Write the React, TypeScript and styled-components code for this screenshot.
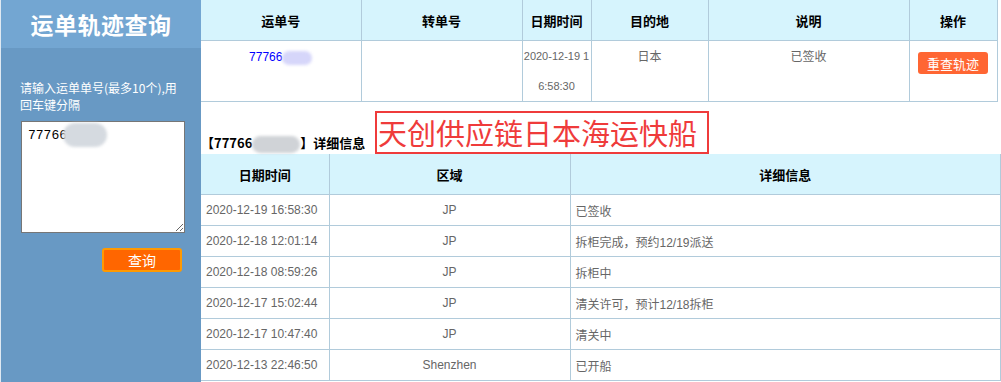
import React from "react";
import styled, { createGlobalStyle } from "styled-components";

const GlobalStyle = createGlobalStyle`
  html, body {
    margin: 0;
    padding: 0;
    background: #fff;
    font-family: "Liberation Sans", "Noto Sans CJK SC", sans-serif;
    font-size: 12px;
    color: #666;
  }
`

const Page = styled.div`
  display: flex;
  width: 1001px;
  height: 382px;
  overflow: hidden;
`

const Sidebar = styled.div`
  width: 200px;
  flex: none;
  background: #6899c4;
  border-left: 1px solid #dfe9f2;
  display: flex;
  flex-direction: column;
  .head{
    height: 48px;
    background: #73a6d2;
    color: #fff;
    font-family: "Noto Sans CJK SC", sans-serif;
    font-size: 23px;
    font-weight: bold;
    display: flex;
    align-items: center;
    justify-content: center;
    letter-spacing: 0.5px;
  }
  .tip{
    margin: 31px 14px 0 19px;
    color: #fff;
    font-family: "Noto Sans CJK SC", sans-serif;
    font-size: 12px;
    line-height: 17px;
  }
`

const InputBox = styled.div`
  position: relative;
  margin: 8px 0 0 20px;
  width: 164px;
  height: 112px;
  textarea{
    box-sizing: border-box;
    width: 164px;
    height: 112px;
    border: 1px solid #767676;
    padding: 6px 6px;
    font-family: "Liberation Mono", monospace;
    font-size: 13px;
    color: #000;
    resize: both;
    outline: none;
  }
`

const Blob = styled.span<{ $w: number, $h: number, $c: string }>`
  display: inline-block;
  width: ${p => p.$w}px;
  height: ${p => p.$h}px;
  background: ${p => p.$c};
  border-radius: ${p => p.$h / 2}px;
  filter: blur(1.5px);
  vertical-align: middle;
`

const MaskBlob = styled(Blob)`
  position: absolute;
  left: 42px;
  top: 2px;
`

const SearchButton = styled.button`
  align-self: flex-end;
  margin: 15px 19px 0 0;
  width: 80px;
  height: 24px;
  background: #ff6600;
  border: 2px solid #ff9900;
  border-radius: 3px;
  color: #fff;
  font-family: "Noto Sans CJK SC", sans-serif;
  font-size: 14px;
  padding: 0;
`

const Main = styled.div`
  flex: 1;
  display: flex;
  flex-direction: column;
`

const Table = styled.table<{ $width: number }>`
  width: ${p => p.$width}px;
  border-collapse: collapse;
  table-layout: fixed;
  th{
    background: #d6f4fd;
    color: #000;
    font-family: "Noto Sans CJK SC", sans-serif;
    font-size: 13px;
    font-weight: bold;
    border: 1px solid #b1cbdb;
    border-top: none;
    height: 40px;
    padding: 0;
  }
  td{
    border: 1px solid #b1cbdb;
    padding: 0;
  }
  tr > *:first-child{
    border-left: none;
  }
`

const TopCell = styled.td`
  text-align: center;
  vertical-align: top;
  line-height: 30px;
  height: 60px;
  word-break: break-all;
  font-family: "Noto Sans CJK SC", "Liberation Sans", sans-serif;
  a{
    color: #0000ff;
    text-decoration: none;
    font-family: "Liberation Sans", sans-serif;
  }
`

const DateCell = styled(TopCell)`
  font-family: "Liberation Sans", sans-serif;
  font-size: 11px;
`

const RetryButton = styled.button`
  margin-top: 11px;
  width: 70px;
  height: 22px;
  background: #ff6633;
  border: none;
  border-radius: 3px;
  color: #fff;
  font-family: "Noto Sans CJK SC", sans-serif;
  font-size: 13px;
  padding: 0;
  vertical-align: top;
`

const TitleBar = styled.div`
  position: relative;
  height: 52px;
  display: flex;
  align-items: flex-end;
  .title{
    color: #000;
    font-family: "Noto Sans CJK SC", sans-serif;
    font-weight: bold;
    font-size: 13px;
    line-height: 20px;
    margin-bottom: 1px;
  }
  .brand{
    position: absolute;
    left: 174px;
    top: 9px;
    box-sizing: border-box;
    width: 334px;
    height: 43px;
    border: 2px solid #ef3b3b;
    color: #ef3b3b;
    font-family: "Noto Sans CJK SC", sans-serif;
    font-size: 29px;
    line-height: 38px;
    padding-left: 1px;
    background: #fff;
    white-space: nowrap;
    overflow: hidden;
  }
`

const DetailCell = styled.td<{ $align: string }>`
  height: 30px;
  text-align: ${p => p.$align};
  padding-left: ${p => p.$align === 'left' ? '5px' : '0'} !important;
  font-family: "Liberation Sans", "Noto Sans CJK SC", sans-serif;
  font-size: 12px;
  color: #666;
`

const tracks = [
  {time: '2020-12-19 16:58:30', area: 'JP', info: '已签收'},
  {time: '2020-12-18 12:01:14', area: 'JP', info: '拆柜完成，预约12/19派送'},
  {time: '2020-12-18 08:59:26', area: 'JP', info: '拆柜中'},
  {time: '2020-12-17 15:02:44', area: 'JP', info: '清关许可，预计12/18拆柜'},
  {time: '2020-12-17 10:47:40', area: 'JP', info: '清关中'},
  {time: '2020-12-13 22:46:50', area: 'Shenzhen', info: '已开船'}
]

function App() {
  return (
    <>
      <GlobalStyle/>
      <Page>
        <Sidebar>
          <div className="head">运单轨迹查询</div>
          <div className="tip">请输入运单单号(最多10个),用回车键分隔</div>
          <InputBox>
            <textarea defaultValue="77766"/>
            <MaskBlob $w={44} $h={24} $c="#d5dae0"/>
          </InputBox>
          <SearchButton>查询</SearchButton>
        </Sidebar>
        <Main>
          <Table $width={796}>
            <colgroup>
              <col style={{width: 160}}/>
              <col style={{width: 161}}/>
              <col style={{width: 69}}/>
              <col style={{width: 117}}/>
              <col style={{width: 201}}/>
              <col style={{width: 88}}/>
            </colgroup>
            <thead>
              <tr>
                <th>运单号</th>
                <th>转单号</th>
                <th>日期时间</th>
                <th>目的地</th>
                <th>说明</th>
                <th>操作</th>
              </tr>
            </thead>
            <tbody>
              <tr>
                <TopCell><a href="#">77766<Blob $w={30} $h={14} $c="#d6d6fa"/></a></TopCell>
                <TopCell/>
                <DateCell>2020-12-19 16:58:30</DateCell>
                <TopCell>日本</TopCell>
                <TopCell>已签收</TopCell>
                <TopCell><RetryButton>重查轨迹</RetryButton></TopCell>
              </tr>
            </tbody>
          </Table>
          <TitleBar>
            <span className="title">【77766<Blob $w={48} $h={17} $c="#d0d3d7"/>】详细信息</span>
            <div className="brand">天创供应链日本海运快船</div>
          </TitleBar>
          <Table $width={800}>
            <colgroup>
              <col style={{width: 128}}/>
              <col style={{width: 241}}/>
              <col/>
            </colgroup>
            <thead>
              <tr>
                <th>日期时间</th>
                <th>区域</th>
                <th>详细信息</th>
              </tr>
            </thead>
            <tbody>
              {tracks.map(t => (
                <tr key={t.time}>
                  <DetailCell $align="left">{t.time}</DetailCell>
                  <DetailCell $align="center">{t.area}</DetailCell>
                  <DetailCell $align="left">{t.info}</DetailCell>
                </tr>
              ))}
            </tbody>
          </Table>
        </Main>
      </Page>
    </>
  )
}

export default App
